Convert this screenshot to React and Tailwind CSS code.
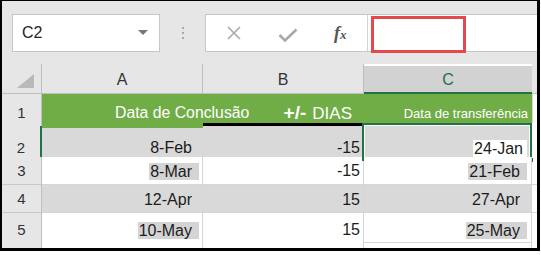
import React from 'react';

const grid = 'grid grid-cols-[40px_161px_161px_168px_5px]';
const sans = { fontFamily: '"Liberation Sans", Arial, sans-serif' };

const rows = [
  { n: 2, h: 'h-[31px]', pt: 'pt-[10px]', band: true, a: '8-Feb', b: '-15', c: '24-Jan', aHi: '', cHi: 'white' },
  { n: 3, h: 'h-[28px]', pt: 'pt-[1px]', band: false, a: '8-Mar', b: '-15', c: '21-Feb', aHi: 'gray', cHi: 'gray' },
  { n: 4, h: 'h-[28px]', pt: 'pt-[2px]', band: true, a: '12-Apr', b: '15', c: '27-Apr', aHi: '', cHi: '' },
  { n: 5, h: 'h-[28px]', pt: 'pt-[5px]', band: false, a: '10-May', b: '15', c: '25-May', aHi: 'gray', cHi: 'gray' },
];

const Hi = ({ kind, children, pr }) => {
  if (!kind) return <span className={pr}>{children}</span>;
  return (
    <span className={`${kind === 'white' ? 'bg-white' : 'bg-[#d4d4d4]'} pl-[1px] ${pr} leading-[17px]`}>{children}</span>
  );
};

const Row = ({ r }) => {
  const bg = r.band ? 'bg-[#d9d9d9]' : 'bg-white';
  const cell = `flex items-center justify-end border-b border-r border-[#d6d6d6] ${r.pt} ${bg}`;
  return (
    <div className={`${grid} ${r.h} text-[16px] text-[#1c1c1c]`} style={sans}>
      <div className={`flex items-center justify-center bg-[#e6e6e6] border-b border-[#c9c9c9] text-[15px] text-[#333] ${r.pt} ${r.n === 2 ? 'border-r-2 border-r-[#217346]' : 'border-r border-r-[#bfbfbf]'}`}>{r.n}</div>
      <div className={`${cell} pr-[3px]`}>
        <Hi kind={r.aHi} pr="pr-[7px]">{r.a}</Hi>
      </div>
      <div className={`${cell} pr-[3px]`}>{r.b}</div>
      <div className={`${cell} pr-[4px] relative`}>
        <Hi kind={r.cHi} pr={r.cHi === 'white' ? 'pr-[4px]' : 'pr-[7px]'}>{r.c}</Hi>
        {r.n === 2 && (
          <div className="absolute -top-[3px] -left-[2px] -right-[1px] -bottom-[1px] border-2 border-[#217346]">
            <div className="absolute inset-0 border border-white" />
            <div className="absolute -right-[4px] -bottom-[4px] w-[6px] h-[6px] bg-[#217346] border border-white" />
          </div>
        )}
      </div>
      <div className="bg-white border-b border-[#d6d6d6]" />
    </div>
  );
};

export default function App() {
  return (
    <div className="w-[541px] h-[255px] bg-white">
      <div className="w-[540px] h-[251px] border-l-2 border-t border-r-[3px] border-b-[3px] border-black flex flex-col overflow-hidden" style={sans}>
        {/* formula bar */}
        <div className="h-[63px] bg-[#e6e6e6] flex items-start pt-[13px] pl-[10px]">
          <div className="w-[148px] h-[38px] bg-white border border-[#c6c6c6] flex items-center justify-between pl-[9px] pr-[11px]">
            <span className="text-[16px] text-[#222]">C2</span>
            <svg width="10" height="6" viewBox="0 0 10 6"><path d="M0 0 L10 0 L5 5 Z" fill="#777" /></svg>
          </div>
          <div className="ml-[22px] mt-[13px] flex flex-col gap-[3px]">
            <div className="w-[2px] h-[2px] bg-[#a8a8a8]" />
            <div className="w-[2px] h-[2px] bg-[#a8a8a8]" />
            <div className="w-[2px] h-[2px] bg-[#a8a8a8]" />
          </div>
          <div className="ml-[21px] flex-1 h-[38px] bg-white border border-r-0 border-[#c6c6c6] flex items-start">
            <div className="w-[162px] h-full border-r border-[#d4d4d4] flex items-center">
              <svg className="ml-[21px]" width="14" height="14" viewBox="0 0 14 14">
                <path d="M1 1 L13 13 M13 1 L1 13" stroke="#a9a9a9" strokeWidth="1.6" fill="none" />
              </svg>
              <svg className="ml-[37px] mt-[3px]" width="20" height="14" viewBox="0 0 20 14">
                <path d="M1.5 7 L7 12.5 L18.5 1.5" stroke="#a9a9a9" strokeWidth="2.6" fill="none" />
              </svg>
              <span className="ml-[36px] text-[#555] italic font-bold text-[18px] leading-none" style={{ fontFamily: '"Liberation Serif", serif' }}>
                f<span className="text-[13px]">x</span>
              </span>
            </div>
            <div className="ml-[3px] mt-[1px] w-[95px] h-[37px] border-[3px] border-[#e5484d] bg-white" />
          </div>
        </div>

        {/* column headers */}
        <div className={`${grid} h-[30px] text-[16px] text-[#333]`}>
          <div className="bg-[#e6e6e6] border-r border-b border-[#bfbfbf] relative">
            <svg className="absolute right-[7px] bottom-[5px]" width="17" height="14" viewBox="0 0 17 14"><path d="M17 0 L17 14 L0 14 Z" fill="#b9b9b9" /></svg>
          </div>
          <div className="bg-[#e6e6e6] border-r border-b border-[#bfbfbf] flex items-center justify-center pt-[2px]">A</div>
          <div className="bg-[#e6e6e6] border-r border-b border-[#bfbfbf] flex items-center justify-center pt-[2px]">B</div>
          <div className="bg-[#d2d2d2] border-b-2 border-[#217346] mt-[2px] flex items-center justify-center text-[#217346] pt-[2px]">C</div>
          <div className="bg-[#e6e6e6] border-b border-[#bfbfbf]" />
        </div>

        {/* row 1 */}
        <div className={`${grid} h-[29px] text-white`}>
          <div className="bg-[#e6e6e6] border-r border-[#bfbfbf] flex items-center justify-center text-[15px] text-[#333] pt-[4px]">1</div>
          <div className="bg-[#70ad47] flex items-center pl-[73px] pt-[5px] whitespace-nowrap text-[15.8px] relative z-10">Data de Conclusão</div>
          <div className="bg-[#70ad47] flex items-center justify-end pr-[12px] pt-[5px] whitespace-nowrap">
            <span className="font-bold text-[19px] mr-[6px]">+/-</span>
            <span className="text-[17px]">DIAS</span>
          </div>
          <div className="bg-[#70ad47] flex items-center justify-end pr-[4px] pt-[5px] whitespace-nowrap text-[13px]">Data de transferência</div>
          <div className="bg-white border-l border-[#d6d6d6]" />
        </div>
        <div className={`${grid} h-[3px]`}>
          <div className="bg-[#e6e6e6] border-r border-[#bfbfbf]" />
          <div className="bg-black" />
          <div className="bg-black" />
          <div className="bg-[#217346]" />
          <div className="bg-white" />
        </div>

        {rows.map(r => <Row key={r.n} r={r} />)}

        <div className={`${grid} flex-1`}>
          <div className="bg-[#e6e6e6] border-r border-[#bfbfbf]" />
          <div className="bg-white border-r border-[#d6d6d6]" />
          <div className="bg-white border-r border-[#d6d6d6]" />
          <div className="bg-white border-r border-[#d6d6d6]" />
          <div className="bg-white" />
        </div>
      </div>
    </div>
  );
}
